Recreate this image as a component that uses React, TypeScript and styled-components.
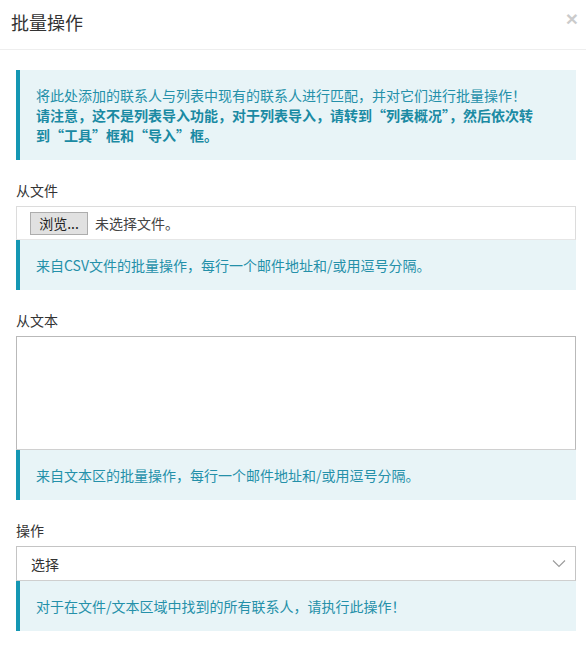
import React from 'react';
import styled, { createGlobalStyle } from 'styled-components';

const GlobalStyle = createGlobalStyle`
  html, body {
    margin: 0;
    padding: 0;
    background: #fff;
  }
  body {
    font-family: "Noto Sans CJK SC", "Liberation Sans", sans-serif;
    font-size: 14px;
    color: #333;
  }
`;

const SModal = styled.div`
  width: 586px;
  background: #fff;
`;

const SHeader = styled.div`
  display: flex;
  align-items: center;
  justify-content: space-between;
  height: 49px;
  padding: 0 8px 0 11px;
  border-bottom: 1px solid #eeeeee;
  box-sizing: content-box;
`;

const STitle = styled.h4`
  margin: 0 0 6px 0;
  font-size: 18px;
  font-weight: 400;
  line-height: 26px;
  color: #333;
`;

const SClose = styled.button`
  border: 0;
  background: transparent;
  padding: 0;
  margin: 0 0 12px 0;
  font-family: "Liberation Sans", sans-serif;
  font-size: 21px;
  font-weight: 700;
  line-height: 1;
  color: #000;
  opacity: 0.2;
  cursor: pointer;
`;

const SBody = styled.div`
  display: flex;
  flex-direction: column;
  width: 560px;
  padding: 20px 10px 30px 16px;
`;

const SAlert = styled.div`
  background: #e8f4f7;
  border-left: 4px solid #1597b3;
  padding: 15px 30px 15px 16px;
  line-height: 20px;
  color: #2490a9;
`;

const SStrong = styled.strong`
  font-weight: 700;
  color: #1a8aa3;
`;

const SField = styled.div`
  display: flex;
  flex-direction: column;
  margin-top: 20px;
`;

const SLabel = styled.label`
  line-height: 20px;
  margin-bottom: 6px;
  color: #333;
`;

const SFileBox = styled.div`
  display: flex;
  align-items: center;
  gap: 7px;
  height: 32px;
  padding: 0 13px;
  border: 1px solid #dcdcdc;
  border-bottom-color: #e6e6e6;
`;

const SBrowseButton = styled.button`
  height: 23px;
  width: 58px;
  padding: 0;
  border: 1px solid #adadad;
  background: #e1e1e1;
  font-family: inherit;
  font-size: 14px;
  line-height: 20px;
  color: #222;
`;

const SFileName = styled.span`
  color: #444;
  line-height: 20px;
`;

const STextArea = styled.textarea`
  display: block;
  height: 114px;
  box-sizing: border-box;
  border: 1px solid #b9b9b9;
  border-bottom-color: #d0d0d0;
  resize: none;
  margin: 0;
  font-family: inherit;
  font-size: 14px;
`;

const SSelectBox = styled.div`
  display: flex;
  align-items: center;
  justify-content: space-between;
  height: 33px;
  padding: 0 9px 0 14px;
  border: 1px solid #c4c4c4;
  border-bottom-color: #cfcfcf;
  color: #333;
`;

const SChevron = styled.svg`
  width: 14px;
  height: 9px;
`;

export default function App() {
  return (
    <>
      <GlobalStyle />
      <SModal>
        <SHeader>
          <STitle>批量操作</STitle>
          <SClose aria-label='关闭'>×</SClose>
        </SHeader>
        <SBody>
          <SAlert>
            将此处添加的联系人与列表中现有的联系人进行匹配，并对它们进行批量操作！
            <br />
            <SStrong>请注意，这不是列表导入功能，对于列表导入，请转到“列表概况”，然后依次转到“工具”框和“导入”框。</SStrong>
          </SAlert>

          <SField>
            <SLabel>从文件</SLabel>
            <SFileBox>
              <SBrowseButton>浏览...</SBrowseButton>
              <SFileName>未选择文件。</SFileName>
            </SFileBox>
            <SAlert>来自CSV文件的批量操作，每行一个邮件地址和/或用逗号分隔。</SAlert>
          </SField>

          <SField>
            <SLabel>从文本</SLabel>
            <STextArea />
            <SAlert>来自文本区的批量操作，每行一个邮件地址和/或用逗号分隔。</SAlert>
          </SField>

          <SField>
            <SLabel>操作</SLabel>
            <SSelectBox>
              <span>选择</span>
              <SChevron viewBox='0 0 14 9'>
                <path d='M1 1.5 L7 7.5 L13 1.5' fill='none' stroke='#9a9a9a' strokeWidth='1.1' />
              </SChevron>
            </SSelectBox>
            <SAlert>对于在文件/文本区域中找到的所有联系人，请执行此操作！</SAlert>
          </SField>
        </SBody>
      </SModal>
    </>
  );
}
